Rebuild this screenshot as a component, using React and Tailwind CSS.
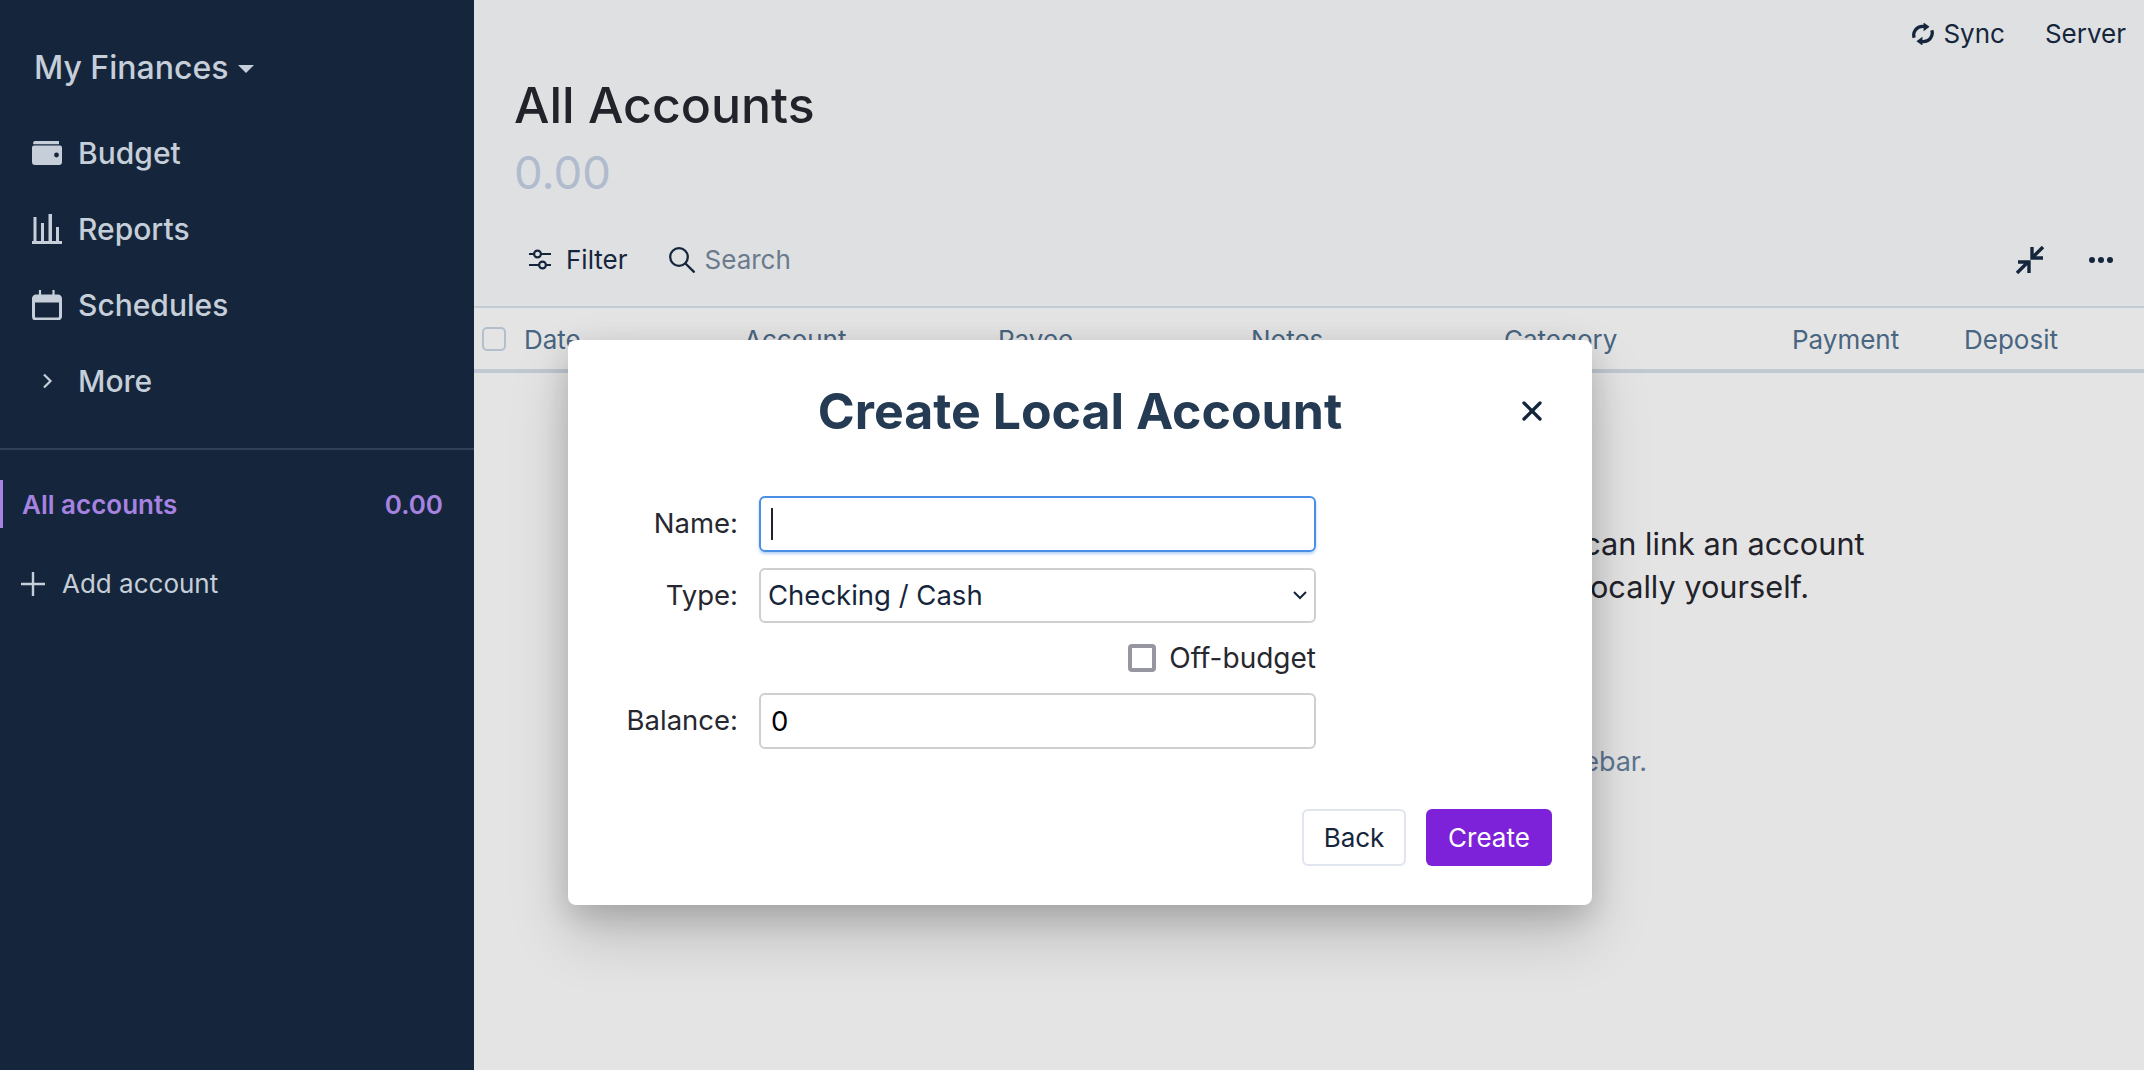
import { X } from "lucide-react";

const columns = [
  { label: "Date", className: "w-[220px]" },
  { label: "Account", className: "w-[254px]" },
  { label: "Payee", className: "w-[253px]" },
  { label: "Notes", className: "w-[253px]" },
  { label: "Category", className: "w-[288px]" },
  { label: "Payment", className: "w-[172px]" },
  { label: "Deposit", className: "" },
];

function WalletIcon() {
  return (
    <svg viewBox="0 0 30 24" className="h-[24px] w-[30px]" fill="currentColor">
      <path d="M3 0h24v3.200H1.500A2 2 0 0 1 3 0z" />
      <path d="M2 4.500h26a2 2 0 0 1 2 2V21a3 3 0 0 1-3 3H3a3 3 0 0 1-3-3V6.500a2 2 0 0 1 2-2z" />
      <circle cx="24.500" cy="14" r="2.400" fill="#15263c" />
    </svg>
  );
}

function ChartIcon() {
  return (
    <svg viewBox="0 0 30 30" className="h-[30px] w-[30px]" fill="currentColor">
      <path d="M0 27h30v3H0zM1.500 3h3v24h-3zM9 9h3v18H9zM16.500 0H20v27h-3.500zM24 13h3v14h-3z" />
    </svg>
  );
}

function CalendarIcon() {
  return (
    <svg viewBox="0 0 30 30" className="h-[30px] w-[30px]" fill="none" stroke="currentColor">
      <path strokeWidth="3" d="M4 6h22a2.500 2.500 0 0 1 2.500 2.500v18A2.500 2.500 0 0 1 26 29H4a2.500 2.500 0 0 1-2.500-2.500v-18A2.500 2.500 0 0 1 4 6z" />
      <path strokeWidth="6" d="M1 9.500h28" />
      <path strokeWidth="2.200" d="M8 0v6M21.500 0v6" />
    </svg>
  );
}

function MoreChevron() {
  return (
    <svg viewBox="0 0 11 16" className="h-[16px] w-[11px]" fill="none" stroke="currentColor" strokeWidth="2.200">
      <path d="M2 1.500l6.500 6.500-6.500 6.500" />
    </svg>
  );
}

function PlusIcon() {
  return (
    <svg viewBox="0 0 24 24" className="h-[24px] w-[24px]" fill="none" stroke="currentColor" strokeWidth="2.400">
      <path d="M12 0v24M0 12h24" />
    </svg>
  );
}

function SyncIcon() {
  return (
    <svg viewBox="0 0 20 20" className="h-[22px] w-[22px]">
      <path d="M2 13.500A8 8 0 0 1 10 3h1.500M18 6.500A8 8 0 0 1 10 17H8.500" fill="none" stroke="currentColor" strokeWidth="3" />
      <path d="M10.500 -0.500L16 3.500l-5.500 4zM9.500 20.500L4 16.500l5.500-4z" fill="currentColor" />
    </svg>
  );
}

function FilterIcon() {
  return (
    <svg viewBox="0 0 22 22" className="h-[22px] w-[22px]" fill="none" stroke="currentColor" strokeWidth="2.200">
      <path d="M0 5h5M12 5h10M0 16h10M17 16h5" />
      <circle cx="8.500" cy="5" r="3.400" />
      <circle cx="13.500" cy="16" r="3.400" />
    </svg>
  );
}

function SearchIcon() {
  return (
    <svg viewBox="0 0 26 26" className="h-[26px] w-[26px]" fill="none" stroke="currentColor" strokeWidth="2.300">
      <circle cx="10" cy="10" r="8.800" />
      <path d="M16 16l9.500 9.500" />
    </svg>
  );
}

function CollapseIcon() {
  return (
    <svg viewBox="0 0 28 28" className="h-[28px] w-[28px]" fill="none" stroke="currentColor" strokeWidth="3.400">
      <path d="M27 1 16.500 11.500M16 1v11h11" />
      <path d="M1 27 12 16M2 16h11v11" />
    </svg>
  );
}

function NavItem({ icon, label }) {
  return (
    <div className="flex h-[76px] items-center">
      <div className="mr-[8px] flex w-[46px] justify-center">{icon}</div>
      <span className="text-[30px] font-medium">{label}</span>
    </div>
  );
}

function FormRow({ label, children }) {
  return (
    <div className="flex items-center gap-[21px]">
      <span className="w-[170px] text-right text-[27.500px] text-[#27272f]">{label}</span>
      <div className="w-[557px]">{children}</div>
    </div>
  );
}

export default function App() {
  return (
    <div
      className="relative flex h-[1070px] w-[2144px] overflow-hidden bg-[#e4e4e4]"
      style={{ fontFamily: "Inter, 'Noto Sans', sans-serif" }}
    >
      <aside className="flex w-[474px] shrink-0 flex-col bg-[#15263c] text-[#c5ced9]">
        <div className="flex items-center gap-[10px] pl-[34px] pt-[47px] text-[32px] font-medium leading-[42px]">
          My Finances
          <span className="mt-[2px] border-x-[8px] border-t-[8px] border-x-transparent border-t-[#c5ced9]" />
        </div>
        <nav className="mt-[26px] flex flex-col pl-[24px]">
          <NavItem icon={<WalletIcon />} label="Budget" />
          <NavItem icon={<ChartIcon />} label="Reports" />
          <NavItem icon={<CalendarIcon />} label="Schedules" />
          <NavItem icon={<MoreChevron />} label="More" />
        </nav>
        <div className="mt-[29px] h-[2px] bg-[#2f4058]" />
        <div className="mt-[30px] flex h-[48px] items-center justify-between border-l-[3px] border-[#a683e0] pl-[19px] pr-[31px] text-[26px] font-semibold text-[#a683e0]">
          <span>All accounts</span>
          <span>0.00</span>
        </div>
        <div className="mt-[36px] flex items-center gap-[17px] pl-[21px] text-[26px]">
          <PlusIcon />
          Add account
        </div>
      </aside>

      <main className="flex min-w-0 flex-1 flex-col">
        <header className="h-[308px] shrink-0 border-b-2 border-[#c3cbd3] bg-[#dfe0e2]">
          <div className="flex justify-end gap-[40px] pr-[18px] pt-[18px] text-[26px] leading-[32px] text-[#15263c]">
            <span className="flex items-center gap-[9px]">
              <SyncIcon />
              Sync
            </span>
            <span>Server</span>
          </div>
          <h1 className="pl-[40px] pt-[26px] text-[50px] font-medium leading-[58px] text-[#22222a]">All Accounts</h1>
          <div className="pl-[40px] pt-[12px] text-[45.500px] leading-[54px] text-[#b0bccd]">0.00</div>
          <div className="flex items-center justify-between pl-[55px] pr-[31px] pt-[44px] text-[26px] leading-[32px]">
            <div className="flex items-center text-[#15263c]">
              <FilterIcon />
              <span className="ml-[15px]">Filter</span>
              <span className="ml-[41px]">
                <SearchIcon />
              </span>
              <span className="ml-[10px] text-[#6b7a8c]">Search</span>
            </div>
            <div className="flex items-center gap-[45px] text-[#15263c]">
              <CollapseIcon />
              <svg viewBox="0 0 24 6" className="h-[6px] w-[24px]" fill="currentColor">
                <circle cx="3" cy="3" r="3" />
                <circle cx="12" cy="3" r="3" />
                <circle cx="21" cy="3" r="3" />
              </svg>
            </div>
          </div>
        </header>

        <div className="flex h-[65px] shrink-0 items-center border-b-4 border-[#c0c8d2] pl-[8px] text-[26px] text-[#486581]">
          <span className="mr-[18px] h-[24px] w-[24px] rounded-[5px] border-2 border-[#b3bfcd]" />
          {columns.map((column) => (
            <span key={column.label} className={`pt-[2px] ${column.className}`}>
              {column.label}
            </span>
          ))}
        </div>

        <div className="flex flex-col items-center pt-[149px] text-center">
          <p className="text-[30.700px] leading-[43px] text-[#22222a]">
            For Actual to be useful, you need to add an account. You can link an account
            <br />
            to automatically download transactions, or manage it locally yourself.
          </p>
          <p className="mt-[139px] text-[27px] leading-[30px] text-[#5d7590]">
            In the future, you can add accounts from the sidebar.
          </p>
        </div>
      </main>

      <div className="absolute left-[568px] top-[340px] flex h-[565px] w-[1024px] flex-col rounded-[8px] bg-white shadow-[0_30px_60px_rgba(0,0,0,0.18),0_10px_30px_rgba(0,0,0,0.15)]">
        <div className="relative flex h-[142px] items-center justify-center">
          <h2 className="text-[50px] font-bold text-[#243b53]">Create Local Account</h2>
          <X size={32} strokeWidth={2.500} className="absolute right-[44px] top-[55px] text-[#15263c]" />
        </div>

        <div className="mt-[14px] flex flex-col">
          <FormRow label="Name:">
            <div className="flex h-[56px] items-center rounded-[6px] border-2 border-[#4a8ee8] pl-[10px] shadow-[0_2px_3px_rgba(74,142,232,0.4)]">
              <span className="h-[32px] w-[2px] bg-[#22222a]" />
            </div>
          </FormRow>
          <div className="mt-[16px]">
            <FormRow label="Type:">
              <div className="relative">
                <select className="h-[55px] w-full appearance-none rounded-[6px] border-2 border-[#cfcfcf] bg-white pl-[7px] text-[27.500px] text-[#15263c] outline-none">
                  <option>Checking / Cash</option>
                </select>
                <svg viewBox="0 0 14 9" className="absolute right-[9px] top-[23px] h-[9px] w-[14px]" fill="none" stroke="#15263c" strokeWidth="2">
                  <path d="M1 1l6 6 6-6" />
                </svg>
              </div>
            </FormRow>
          </div>
          <div className="mt-[19px]">
            <FormRow label="">
              <div className="flex items-center justify-end gap-[13px] text-[28px] leading-[32px] text-[#27272f]">
                <span className="h-[28px] w-[28px] rounded-[4px] border-[4px] border-[#9696a0]" />
                Off-budget
              </div>
            </FormRow>
          </div>
          <div className="mt-[19px]">
            <FormRow label="Balance:">
              <input
                readOnly
                value="0"
                className="h-[56px] w-full rounded-[6px] border-2 border-[#cfcfcf] pl-[10px] text-[27.500px] text-black outline-none"
              />
            </FormRow>
          </div>
        </div>

        <div className="mt-[60px] flex justify-end gap-[20px] pr-[40px] text-[26px]">
          <button className="h-[57px] w-[104px] rounded-[6px] border-2 border-[#e0e5ee] bg-white text-[#15263c]">Back</button>
          <button className="h-[57px] w-[126px] rounded-[6px] bg-[#7e22d9] text-white">Create</button>
        </div>
      </div>
    </div>
  );
}
